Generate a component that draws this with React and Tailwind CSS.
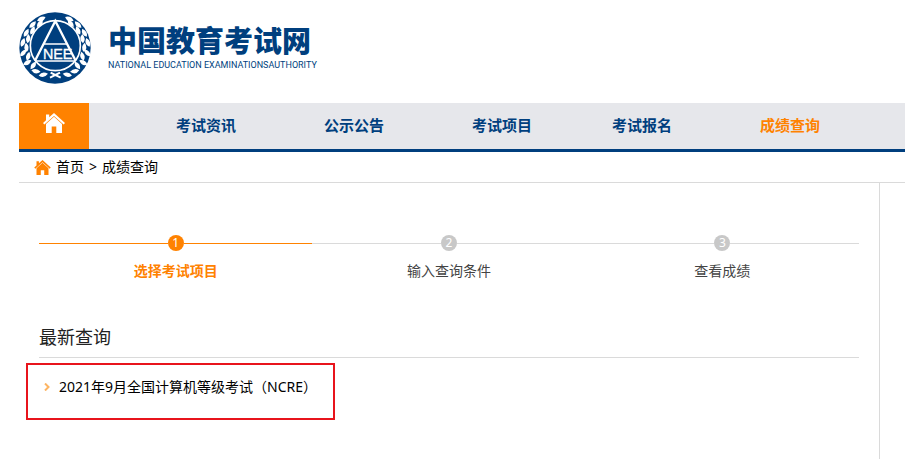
// Score query landing page: logo header, main nav, breadcrumb, steps and latest queries.

import clsx from 'clsx';

const NAV_ITEMS = [
  { label: '考试资讯', pad: 'pr-[44px]' },
  { label: '公示公告', pad: 'pr-[44px]' },
  { label: '考试项目', pad: 'pr-9' },
  { label: '考试报名', pad: 'pr-[44px]' },
  { label: '成绩查询', pad: 'pr-[44px]', active: true },
];

const STEPS = ['选择考试项目', '输入查询条件', '查看成绩'];

// One side of the laurel wreath, [x, y, rotation] per leaf
const LEAVES = [
  [98, 209, 80], [76, 198, 100], [68, 182, 35], [50, 173, 60],
  [53, 155, 15], [38, 144, 40], [48, 128, -5], [37, 113, 20],
  [53, 102, 5], [47, 84, 30], [66, 77, 25], [66, 59, 45], [88, 56, 40],
  [92, 42, 65],
];

function Wreath() {
  return (
    <g fill="#fff">
      {LEAVES.map(([x, y, r]) => (
        <path key={`${x}-${y}`} d="M0 -15Q14 0 0 13Q-12 0 0 -15Z" transform={`translate(${x} ${y}) rotate(${r})`} />
      ))}
    </g>
  );
}

function Emblem() {
  return (
    <svg viewBox="26 21 216 216" className="size-[72px] shrink-0" role="img" aria-label="NEEA">
      <circle cx="134" cy="129" r="107" fill="#003f7e" />
      <Wreath />
      <g transform="translate(270 0) scale(-1 1)">
        <Wreath />
      </g>
      <path d="M121 203L151 218M149 203L119 218" stroke="#fff" strokeWidth="6" />
      <circle cx="135" cy="122" r="75" fill="#003f7e" stroke="#fff" strokeWidth="5" />
      <path d="M74 167L135 48L196 167" fill="none" stroke="#fff" strokeWidth="7" />
      <path d="M101 117H169M74 168H196" fill="none" stroke="#fff" strokeWidth="5" />
      <text
        x="142"
        y="161"
        textAnchor="middle"
        fill="#fff"
        stroke="#fff"
        strokeWidth="1"
        fontSize="43"
        fontFamily="Liberation Sans, sans-serif"
      >
        NEE
      </text>
    </svg>
  );
}

function HomeIcon({ className }) {
  return (
    <svg viewBox="0 0 22 20" className={className} fill="currentColor" aria-hidden="true">
      <path d="M11 0L22 10L20.6 11.6L11 3.1L1.4 11.6L0 10L3 7.2V1.5H6.2V4.3Z" />
      <path d="M11 3.8L19 11V20H13.3V13.5H8.7V20H3V11Z" />
    </svg>
  );
}

function Header() {
  return (
    <header className="flex gap-[17px] pt-3 pb-[19px]">
      <Emblem />
      <div className="pt-3 text-[#003f7e] whitespace-nowrap">
        <h1 className="text-[29px] leading-[34px] font-black">中国教育考试网</h1>
        <p className="font-['Roboto','Liberation_Sans',sans-serif] text-[9px] leading-[14px]">
          NATIONAL EDUCATION EXAMINATIONSAUTHORITY
        </p>
      </div>
    </header>
  );
}

function Nav() {
  return (
    <nav className="flex h-[49px] border-b-3 border-[#003f7e] bg-[#e6e7eb]">
      <a href="#" aria-label="首页" className="flex w-[70px] shrink-0 justify-center bg-[#ff8200] pt-[10px] text-white">
        <HomeIcon className="h-5 w-[22px]" />
      </a>
      <div className="flex pl-[43px]">
        {NAV_ITEMS.map(({ label, pad, active }) => (
          <a
            key={label}
            href="#"
            className={clsx(
              'pl-[44px] text-[15px] leading-[45px] font-bold whitespace-nowrap',
              pad,
              active ? 'text-[#ff8200]' : 'text-[#003f7e]'
            )}
          >
            {label}
          </a>
        ))}
      </div>
    </nav>
  );
}

function Steps() {
  return (
    <ol className="grid grid-cols-3">
      {STEPS.map((label, i) => (
        <li key={label} className={clsx('text-center text-sm', i === 0 ? 'font-bold text-[#ff8200]' : 'text-[#444]')}>
          <div className="flex items-center">
            <span className={clsx('h-px flex-1', i === 0 ? 'bg-[#ff8200]' : 'bg-[#dadada]')} />
            <span
              className={clsx(
                'size-4 rounded-full text-xs leading-4 font-normal text-white',
                i === 0 ? 'bg-[#ff8200]' : 'bg-[#c8c8c8]'
              )}
            >
              {i + 1}
            </span>
            <span className={clsx('h-px flex-1', i === 0 ? 'bg-[#ff8200]' : 'bg-[#dadada]')} />
          </div>
          <p className="mt-[10px] leading-5">{label}</p>
        </li>
      ))}
    </ol>
  );
}

export default function App() {
  return (
    <div className="flex min-h-screen flex-col overflow-x-hidden bg-white pl-[19px] font-['Noto_Sans','Noto_Sans_CJK_SC',sans-serif] text-black">
      <Header />
      <Nav />
      <div className="flex h-[31px] items-center border-b border-[#dadada] pl-[15px] text-sm">
        <HomeIcon className="mr-[5px] h-[15px] w-[17px] text-[#ff8200]" />
        <a href="#">首页</a>
        <span className="mx-[5px]">&gt;</span>
        <a href="#">成绩查询</a>
      </div>
      <div className="flex flex-1">
        <main className="flex-1 border-r border-[#dadada] px-5 pt-[52px]">
          <Steps />
          <h2 className="mt-[42px] border-b border-[#dadada] pb-[6px] text-lg leading-7 text-[#222]">最新查询</h2>
          <ul className="mt-[5px] -ml-[13px] h-[57px] w-[309px] border-2 border-[#e8141c] pt-3 pl-4">
            <li>
              <a href="#" className="flex items-center gap-[9px] text-sm leading-5 whitespace-nowrap">
                <svg viewBox="0 0 6 8" className="h-2 w-[6px]" fill="none" stroke="#fdb462" strokeWidth="2" aria-hidden="true">
                  <path d="M1 0.5L4.5 4L1 7.5" />
                </svg>
                2021年9月全国计算机等级考试（NCRE）
              </a>
            </li>
          </ul>
        </main>
        <aside className="w-[25px]" />
      </div>
    </div>
  );
}
